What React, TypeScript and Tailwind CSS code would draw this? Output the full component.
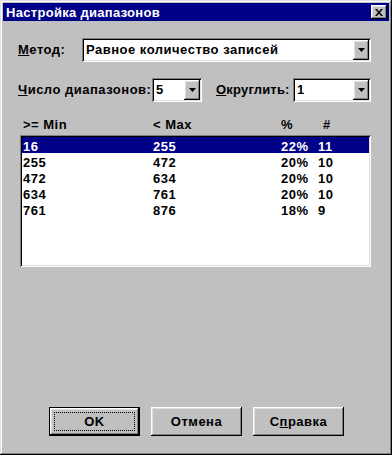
import React from "react";

const raised =
  "shadow-[inset_-1px_-1px_#000000,inset_1px_1px_#ffffff,inset_-2px_-2px_#808080,inset_2px_2px_#dfdfdf]";
const sunken =
  "shadow-[inset_1px_1px_#808080,inset_-1px_-1px_#ffffff,inset_2px_2px_#000000,inset_-2px_-2px_#dfdfdf]";

function Arrow() {
  return (
    <div className={`w-[16px] h-[20px] bg-[#c0c0c0] ${raised} flex items-center justify-center`}>
      <svg width="7" height="4" viewBox="0 0 7 4">
        <path d="M0 0H7L3.5 4Z" fill="#000" />
      </svg>
    </div>
  );
}

function Combo({ value, w }: { value: string; w: string }) {
  return (
    <div className={`${w} h-[24px] bg-white ${sunken} flex items-center p-[2px]`}>
      <span className="flex-1 pl-[2px]">{value}</span>
      <Arrow />
    </div>
  );
}

const rows = [
  ["16", "255", "22%", "11"],
  ["255", "472", "20%", "10"],
  ["472", "634", "20%", "10"],
  ["634", "761", "20%", "10"],
  ["761", "876", "18%", "9"],
];

function Btn({ children, def }: { children: React.ReactNode; def?: boolean }) {
  if (def) {
    return (
      <div className="w-[91px] h-[29px] border border-black">
        <div className={`w-full h-full bg-[#c0c0c0] ${raised} p-[4px]`}>
          <div className="w-full h-full border border-dotted border-black flex items-center justify-center">
            {children}
          </div>
        </div>
      </div>
    );
  }
  return (
    <div className={`w-[91px] h-[29px] bg-[#c0c0c0] ${raised} flex items-center justify-center`}>
      {children}
    </div>
  );
}

export default function App() {
  return (
    <div
      className={`w-[392px] h-[455px] bg-[#c0c0c0] p-[3px] flex flex-col font-bold text-black text-[13px] tracking-[0.5px] shadow-[inset_-1px_-1px_#000000,inset_1px_1px_#dfdfdf,inset_-2px_-2px_#808080,inset_2px_2px_#ffffff]`}
      style={{ fontFamily: '"Liberation Sans", Arial, sans-serif' }}
    >
      <div className="h-[18px] bg-[#000088] flex items-center justify-between pl-[3px] pr-[2px]">
        <span className="text-white text-[13px] leading-none tracking-[0.3px]">Настройка диапазонов</span>
        <div className={`w-[16px] h-[14px] bg-[#c0c0c0] ${raised} flex items-center justify-center`}>
          <svg width="8" height="7" viewBox="0 0 8 7">
            <path d="M0 0h2l2 2.5L6 0h2L5 3.5 8 7H6L4 4.5 2 7H0l3-3.5Z" fill="#000" />
          </svg>
        </div>
      </div>

      <div className="flex flex-col pl-[15px] pr-[18px]">
        <div className="flex items-center mt-[17px]">
          <span className="w-[64px]">
            <span className="underline">М</span>етод:
          </span>
          <Combo value="Равное количество записей" w="w-[289px]" />
        </div>

        <div className="flex items-center mt-[16px]">
          <span className="w-[134px] whitespace-nowrap">
            <span className="underline">Ч</span>исло диапазонов:
          </span>
          <Combo value="5" w="w-[50px]" />
          <span className="ml-[14px] w-[77px] tracking-[0.2px] whitespace-nowrap">
            <span className="underline">О</span>круглить:
          </span>
          <Combo value="1" w="w-[78px]" />
        </div>

        <div className="grid grid-cols-[130px_128px_37px_1fr] pl-[5px] mt-[13px] h-[20px] items-center">
          <span>&gt;= Min</span>
          <span>&lt; Max</span>
          <span>%</span>
          <span className="pl-[5px]">#</span>
        </div>

        <div className={`ml-[2px] w-[351px] h-[132px] bg-white ${sunken} p-[2px]`}>
          {rows.map((r, i) => (
            <div
              key={i}
              className={`grid grid-cols-[130px_128px_37px_1fr] h-[16px] items-center pl-[1px] ${
                i === 0 ? "bg-[#000088] text-white" : ""
              }`}
            >
              {r.map((c, j) => (
                <span key={j}>{c}</span>
              ))}
            </div>
          ))}
        </div>
      </div>

      <div className="flex-1" />
      <div className="flex gap-[11px] pl-[46px] mb-[16px]">
        <Btn def>OK</Btn>
        <Btn>Отмена</Btn>
        <Btn>
          <span>
            С<span className="underline">п</span>равка
          </span>
        </Btn>
      </div>
    </div>
  );
}
